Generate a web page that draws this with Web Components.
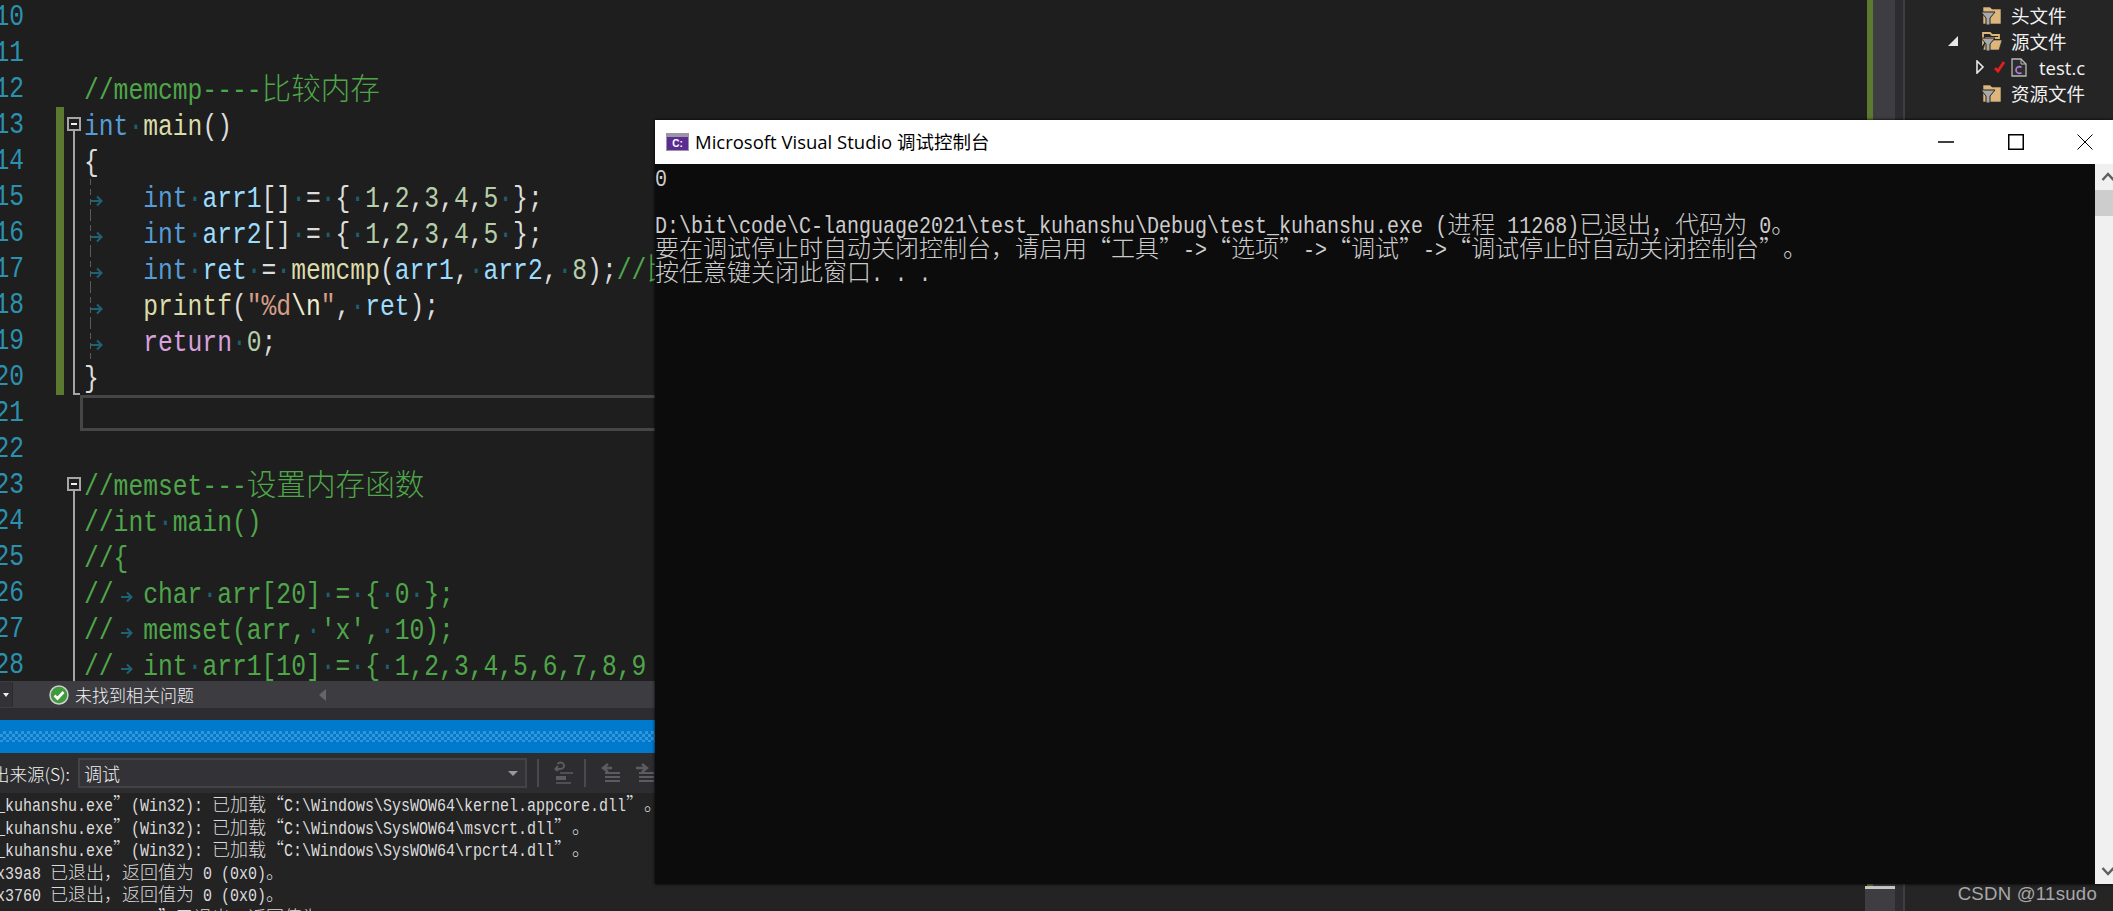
<!DOCTYPE html>
<html>
<head>
<meta charset="utf-8">
<title>Visual Studio</title>
<style>
  html, body { margin: 0; height: 100%; background: #1e1e1e; overflow: hidden; }
</style>
</head>
<body>
<vs-ide>
  <vs-editor slot="editor"></vs-editor>
  <vs-status slot="status"></vs-status>
  <vs-output slot="output"></vs-output>
  <vs-explorer slot="explorer">
    <tree-row icon="folder">头文件</tree-row>
    <tree-row icon="open" twisty="open">源文件</tree-row>
    <tree-row icon="file" twisty="closed">test.c</tree-row>
    <tree-row icon="folder">资源文件</tree-row>
  </vs-explorer>
  <vs-console slot="console"></vs-console>
</vs-ide>

<script>
// Text in the shot is a thin, tall fixed font: latin runs get a mono font stretched a bit, CJK runs a full-width font.
const textCss = `
  .lat { font-family: "Liberation Mono", monospace; font-size: var(--lat); display: inline-block; white-space: pre;
         transform: scaleY(1.2); transform-origin: 50% 66%; }
  .cjk { font-family: "Noto Sans CJK SC", sans-serif; font-size: var(--cjk); font-weight: 300; white-space: pre; text-spacing-trim: space-all; }
  .dot { color: #1d5f70; }
  .strut { font-family: "Noto Sans CJK SC", sans-serif; font-size: var(--cjk); font-weight: 300; }
`;

function esc(s) {
  return s.replace(/&/g, '&amp;').replace(/</g, '&lt;');
}

function runs(text) {
  return text.replace(/([\u3000-\u9fff\uff00-\uffef“”]+)|(·+)|([^\u3000-\u9fff\uff00-\uffef“”·]+)/g, (m, cjk, dot) => {
    if (cjk) return `<span class="cjk">${m}</span>`;
    if (dot) return `<span class="lat dot">${m}</span>`;
    return `<span class="lat">${esc(m)}</span>`;
  });
}

class VsIde extends HTMLElement {
  connectedCallback() {
    this.attachShadow({ mode: 'open' });
    this.shadowRoot.innerHTML = `
      <style>
        :host { display: grid; grid-template-columns: 1865px 30px 10px 1fr; width: 2113px; height: 911px; position: relative; overflow: hidden; background: #1e1e1e; }
        .main { display: flex; flex-direction: column; min-width: 0; height: 911px; }
        .scroll { display: flex; flex-direction: column; background: #3e3e42; }
        .scroll .top { flex: 1; background: #3e3e42; border-left: 2px solid #1e1e1e; }
        .scroll .top i { display: block; width: 6px; height: 100%; background: #5b7a2f; }
        .scroll .bottom { height: 25px; border-top: 3px solid #c8c8c8; box-sizing: border-box; }
        .split { background: #2d2d30; border-right: 2px solid #3e3e42; }
        .mark { position: absolute; right: 16px; bottom: 6px; font: 18.6px "Liberation Sans", sans-serif; color: #a8a8a8; letter-spacing: .25px; }
      </style>
      <div class="main">
        <slot name="editor"></slot>
        <slot name="status"></slot>
        <slot name="output"></slot>
      </div>
      <div class="scroll"><div class="top"><i></i></div><div class="bottom"></div></div>
      <div class="split"></div>
      <slot name="explorer"></slot>
      <slot name="console"></slot>
      <div class="mark">CSDN @11sudo</div>
    `;
  }
}

// n, source, fold gutter kind, flags. ‹x|..› marks a coloured token, → is a tab up to the next 4 column stop.
const SOURCE = [
  [10, ''],
  [11, ''],
  [12, '‹c|//memcmp----比较内存›'],
  [13, '‹k|int›·‹f|main›()', 'open', 'changed'],
  [14, '{', 'line', 'changed'],
  [15, '→‹k|int›·‹v|arr1›[]·=·{·‹n|1›,‹n|2›,‹n|3›,‹n|4›,‹n|5›·};', 'line', 'changed guide'],
  [16, '→‹k|int›·‹v|arr2›[]·=·{·‹n|1›,‹n|2›,‹n|3›,‹n|4›,‹n|5›·};', 'line', 'changed guide'],
  [17, '→‹k|int›·‹v|ret›·=·‹f|memcmp›(‹v|arr1›,·‹v|arr2›,·‹n|8›);‹c|//比›', 'line', 'changed guide'],
  [18, '→‹f|printf›(‹s|"%d›‹e|\\n›‹s|"›,·‹v|ret›);', 'line', 'changed guide'],
  [19, '→‹r|return›·‹n|0›;', 'line', 'changed guide'],
  [20, '}', 'end', 'changed'],
  [21, '', '', 'cur'],
  [22, ''],
  [23, '‹c|//memset---设置内存函数›', 'open'],
  [24, '‹c|//int›·‹c|main()›', 'line'],
  [25, '‹c|//{›', 'line'],
  [26, '‹c|//›→‹c|char›·‹c|arr[20]›·‹c|=›·‹c|{›·‹c|0›·‹c|};›', 'line'],
  [27, '‹c|//›→‹c|memset(arr,›·‹c|\'x\',›·‹c|10);›', 'line'],
  [28, '‹c|//›→‹c|int›·‹c|arr1[10]›·‹c|=›·‹c|{›·‹c|1,2,3,4,5,6,7,8,9›', 'line'],
  [29, '‹c|//›→‹c|int›', 'line'],
];

function renderCode(src) {
  let col = 0, out = '';
  src.split(/(‹\w\|[^›]*›|→)/).forEach(part => {
    if (!part) return;
    if (part === '→') {
      const w = 4 - col % 4;
      out += `<span class="tab" style="width:${w * 14.8}px"><svg width="12" height="14" viewBox="0 0 12 14"><path d="M0 7h10M6 2.500l4.500 4.500-4.500 4.500" fill="none" stroke="#1d6275" stroke-width="2"/></svg></span>`;
      col += w;
    } else if (part[0] === '‹') {
      const body = part.slice(3, -1);
      out += `<span class="${part[1]}">${runs(body)}</span>`;
      col += [...body].reduce((a, c) => a + (/[\u3000-\u9fff]/.test(c) ? 2 : 1), 0);
    } else {
      out += runs(part);
      col += part.length;
    }
  });
  return out;
}

class VsEditor extends HTMLElement {
  connectedCallback() {
    this.attachShadow({ mode: 'open' });
    const rows = SOURCE.map(([n, src, fold = '', flags = '']) => `
      <div class="row ${flags}">
        <div class="num strut">${runs(String(n))}</div>
        <div class="bar"></div>
        <div class="fold ${fold}">${fold === 'open' ? '<b></b>' : ''}</div>
        <div class="code strut">${renderCode(src)}</div>
      </div>`).join('');
    this.shadowRoot.innerHTML = `
      <style>
        :host { display: block; height: 681px; overflow: hidden; background: #1e1e1e; --lat: 24.67px; --cjk: 29.6px; color: #dcdcdc; }
        ${textCss}
        .list { margin-top: -1px; }
        .row { display: flex; height: 36px; line-height: 36px; }
        .num { width: 24px; box-sizing: border-box; padding-top: 1px; display: flex; justify-content: flex-end; color: #2b91af; flex: none; }
        .bar { width: 8px; margin-left: 32px; flex: none; }
        .changed .bar { background: #5b7a2f; }
        .fold { width: 16px; flex: none; position: relative; }
        .fold.line::before, .fold.open::before, .fold.end::before { content: ""; position: absolute; left: 9px; top: 0; bottom: 0; width: 2px; background: #a5a5a5; }
        .fold.open::before { top: 24px; }
        .fold.end::before { bottom: 1px; }
        .fold.end::after { content: ""; position: absolute; left: 9px; bottom: 0; width: 7px; height: 2px; background: #a5a5a5; }
        .fold b { position: absolute; left: 3px; top: 10px; width: 10px; height: 10px; border: 2px solid #a5a5a5; background: #1e1e1e; }
        .fold b::after { content: ""; position: absolute; left: 2px; right: 2px; top: 4px; height: 2px; background: #f1f1f1; }
        .code { flex: 1; padding-left: 4px; white-space: pre; overflow: hidden; line-height: 31px; }
        .guide .code { background: repeating-linear-gradient(to bottom, #5a5a5a 0 6px, transparent 6px 10px) 10px 0 / 1px 100% no-repeat; }
        .cur .code { border: 3px solid #464646; border-right: 0; box-sizing: border-box; }
        .tab { display: inline-block; box-sizing: border-box; padding-left: 7px; vertical-align: baseline; }
        .tab svg { vertical-align: -1px; }
        .k { color: #569cd6; } .f { color: #dcdcaa; } .v { color: #9cdcfe; } .n { color: #b5cea8; }
        .c { color: #4fa64a; } .r { color: #d8a0df; } .s { color: #d69d85; } .e { color: #efefd0; }
      </style>
      <div class="list">${rows}</div>
    `;
  }
}

class VsStatus extends HTMLElement {
  connectedCallback() {
    this.attachShadow({ mode: 'open' });
    this.shadowRoot.innerHTML = `
      <style>
        :host { display: block; font-family: "Noto Sans CJK SC", sans-serif; flex: none; }
        .strip { height: 27px; background: #3c3c41; display: flex; align-items: center; }
        .drop { width: 12px; height: 25px; background: #333337; border-right: 1px solid #2a2a2d; border-radius: 0 2px 2px 0; display: flex; align-items: center; }
        .drop i { margin-left: 3px; border: 3.5px solid transparent; border-top: 4px solid #f1f1f1; border-bottom: 0; }
        svg.ok { margin-left: 36px; }
        .label { margin-left: 6px; width: 244px; font-size: 17px; font-weight: 300; color: #f1f1f1; }
        .back { border: 6px solid transparent; border-right: 7px solid #66666a; border-left: 0; }
        .gap { height: 12px; background: #2d2d30; }
        .bar { height: 33px; box-sizing: border-box; padding-top: 11px; background: #007acc; }
        .bar i { display: block; height: 11px; opacity: .85;
                 background: conic-gradient(#3d9bdb 25%, transparent 0 50%, #3d9bdb 0 75%, transparent 0) 0 0 / 6px 6px; }
      </style>
      <div class="strip">
        <div class="drop"><i></i></div>
        <svg class="ok" width="20" height="20" viewBox="0 0 20 20">
          <circle cx="10" cy="10" r="9" fill="#3f9a3c" stroke="#cfcfcf" stroke-width="1.5"/>
          <path d="M5.5 10.5l3 3 6-6.5" fill="none" stroke="#fff" stroke-width="2.6"/>
        </svg>
        <div class="label">未找到相关问题</div>
        <div class="back"></div>
      </div>
      <div class="gap"></div>
      <div class="bar"><i></i></div>
    `;
  }
}

const OUTPUT = [
  String.raw`_kuhanshu.exe”(Win32): 已加载“C:\Windows\SysWOW64\kernel.appcore.dll”。`,
  String.raw`_kuhanshu.exe”(Win32): 已加载“C:\Windows\SysWOW64\msvcrt.dll”。`,
  String.raw`_kuhanshu.exe”(Win32): 已加载“C:\Windows\SysWOW64\rpcrt4.dll”。`,
  'x39a8 已退出\uff0c返回值为 0 (0x0)。',
  'x3760 已退出\uff0c返回值为 0 (0x0)。',
  '[    _kuhanshu.exe”已退出\uff0c返回值为 0 (0x0)。',
];

class VsOutput extends HTMLElement {
  connectedCallback() {
    this.attachShadow({ mode: 'open' });
    this.shadowRoot.innerHTML = `
      <style>
        :host { display: flex; flex-direction: column; flex: 1; min-height: 0; --lat: 15px; --cjk: 18px; color: #dcdcdc; background: #232324; overflow: hidden; }
        ${textCss}
        .tools { height: 40px; flex: none; background: #2d2d30; display: flex; align-items: center; }
        .src { width: 70px; flex: none; margin-right: 8px; display: flex; justify-content: flex-end; overflow: hidden; white-space: nowrap; font: 300 17.5px "Noto Sans CJK SC", sans-serif; color: #f1f1f1; }
        .combo { width: 449px; height: 30px; flex: none; box-sizing: border-box; border: 2px solid #434346; background: #333337; display: flex; align-items: center; justify-content: space-between; padding: 0 4px; color: #f1f1f1; font: 300 18px "Noto Sans CJK SC", sans-serif; }
        .combo i { border: 5px solid transparent; border-top: 5px solid #999; border-bottom: 0; margin-right: 3px; }
        .sep { width: 2px; height: 28px; background: #4a4a4e; flex: none; }
        svg { flex: none; }
        .log { margin: -1px 0 0 -4px; white-space: pre; line-height: 22.5px; }
        .log div { height: 22.5px; }
      </style>
      <div class="tools">
        <div class="src">出来源(S):</div>
        <div class="combo">调试<i></i></div>
        <div class="sep" style="margin-left:10px"></div>
        <svg style="margin-left:14px" width="20" height="24" viewBox="0 0 20 24" fill="none" stroke="#5c5c60" stroke-width="2">
          <path d="M5 5L2.5 8 5 10M3 8h4c4 0 5-3 3-5.500C9 1 6 1 4.500 3"/>
          <path d="M7 12h13M3 22h15" stroke-width="1.600"/>
          <path d="M3 17h10" stroke-width="4"/>
        </svg>
        <div class="sep" style="margin-left:11px"></div>
        <svg style="margin-left:15px" width="19" height="22" viewBox="0 0 19 22" fill="none" stroke="#5c5c60" stroke-width="2">
          <path d="M7 2L2 6l5 4M2 6h9" stroke-width="2.400"/>
          <path d="M4 11h15M4 15h15M4 19h15" stroke-width="2.200"/>
        </svg>
        <svg style="margin-left:15px" width="19" height="22" viewBox="0 0 19 22" fill="none" stroke="#5c5c60" stroke-width="2">
          <path d="M7 2l5 4-5 4M12 6H1" stroke-width="2.400"/>
          <path d="M4 11h15M4 15h15M4 19h15" stroke-width="2.200"/>
        </svg>
      </div>
      <div class="log strut">${OUTPUT.map(l => `<div>${runs(l)}</div>`).join('')}</div>
    `;
  }
}

class VsExplorer extends HTMLElement {
  connectedCallback() {
    this.attachShadow({ mode: 'open' });
    this.shadowRoot.innerHTML = `
      <style>
        :host { display: block; background: #252526; padding-top: 2px; }
      </style>
      <slot></slot>
    `;
  }
}

const TREE_ICONS = {
  folder: `<svg width="21" height="21" viewBox="0 0 21 21">
      <path d="M2 2h7l2 2h9v15H2z" fill="#dcb67a" stroke="#2a2a2a" stroke-width=".6"/>
      <path d="M0 7h14L9 13v7H5v-7z" fill="#a9a9a9" stroke="#252526"/>
    </svg>`,
  open: `<svg width="21" height="21" viewBox="0 0 21 21">
      <path d="M2 2h7l2 2h7v3H5L2 12z" fill="none" stroke="#dcb67a" stroke-width="1.800"/>
      <path d="M5 9h16l-3 10H2z" fill="#dcb67a" stroke="#2a2a2a" stroke-width=".6"/>
      <path d="M0 7h14L9 13v7H5v-7z" fill="#a9a9a9" stroke="#252526"/>
    </svg>`,
  file: `<svg width="16" height="19" viewBox="0 0 16 19">
      <path d="M1 1h9l5 5v12H1z" fill="#2d2d30" stroke="#b8b8b8" stroke-width="1.300"/>
      <path d="M10 1v5h5" fill="none" stroke="#b8b8b8"/>
      <path d="M10.500 9.500C8 7.800 5 9 5 12s3 4.200 5.500 2.700" fill="none" stroke="#b180d7" stroke-width="1.700"/>
    </svg>`,
};

class TreeRow extends HTMLElement {
  connectedCallback() {
    this.attachShadow({ mode: 'open' });
    const icon = this.getAttribute('icon');
    const twisty = this.getAttribute('twisty');
    let lead = '<span class="pad" style="width:76px"></span>';
    if (twisty === 'open') {
      lead = `<span class="pad" style="width:43px"></span>
        <svg style="width:33px" width="33" height="11" viewBox="0 0 33 11"><path d="M10 0v10H0z" fill="#e8e8e8"/></svg>`;
    }
    if (twisty === 'closed') {
      lead = `<span class="pad" style="width:71px"></span>
        <svg style="width:35px" width="35" height="14" viewBox="0 0 35 14">
          <path d="M1 1l6 6-6 6z" fill="none" stroke="#e8e8e8" stroke-width="1.600"/>
          <path d="M19 8l3 3 6-9" fill="none" stroke="#e51f1f" stroke-width="2.800"/>
        </svg>`;
    }
    this.shadowRoot.innerHTML = `
      <style>
        :host { display: flex; align-items: center; height: 26px; color: #f1f1f1; font: 18.5px "Open Sans", "Noto Sans CJK SC", sans-serif; white-space: nowrap; }
        .pad, svg { flex: none; }
        .icon { width: ${icon === 'file' ? 28 : 30}px; flex: none; display: flex; }
      </style>
      ${lead}<span class="icon">${TREE_ICONS[icon]}</span><slot></slot>
    `;
  }
}

const CONSOLE = [
  '0',
  '',
  String.raw`D:\bit\code\C-language2021\test_kuhanshu\Debug\test_kuhanshu.exe (进程 11268)已退出` + '\uff0c代码为 0。',
  '要在调试停止时自动关闭控制台\uff0c请启用“工具”->“选项”->“调试”->“调试停止时自动关闭控制台”。',
  '按任意键关闭此窗口. . .',
];

class VsConsole extends HTMLElement {
  connectedCallback() {
    this.attachShadow({ mode: 'open' });
    this.shadowRoot.innerHTML = `
      <style>
        :host { position: absolute; left: 655px; top: 120px; width: 1458px; height: 764px; display: flex; flex-direction: column; box-shadow: 0 0 3px #000; --lat: 20px; --cjk: 24px; }
        ${textCss}
        .title { height: 44px; flex: none; background: #fff; display: flex; align-items: center; color: #000; }
        .title svg.app { margin-left: 11px; flex: none; }
        .title .name { margin-left: 6px; flex: 1; padding-bottom: 3px; font: 18.5px "Open Sans", "Noto Sans CJK SC", sans-serif; white-space: nowrap; }
        .btns { display: flex; margin-right: -7px; }
        .btns span { width: 69.500px; height: 44px; display: flex; align-items: center; justify-content: center; }
        .body { flex: 1; display: flex; min-height: 0; background: #0c0c0c; }
        .text { flex: 1; color: #cccccc; line-height: 24px; white-space: pre; overflow: hidden; }
        .text div { height: 23.700px; }
        .bar { width: 18.500px; flex: none; background: #f0f0f0; display: flex; flex-direction: column; }
        .bar .btn { height: 26px; display: flex; align-items: center; }
        .bar .thumb { height: 26px; background: #cdcdcd; }
        .bar .track { flex: 1; }
      </style>
      <div class="title">
        <svg class="app" width="23" height="18" viewBox="0 0 23 18">
          <rect width="23" height="18" fill="#9a96a6"/>
          <rect x="1" y="4" width="21" height="13" fill="#5c2d91"/>
          <text x="11.500" y="14" text-anchor="middle" font-family="Liberation Sans" font-weight="700" font-size="10" fill="#fff">C:\</text>
        </svg>
        <div class="name">Microsoft Visual Studio 调试控制台</div>
        <div class="btns">
          <span><svg width="16" height="2"><path d="M0 1h16" stroke="#000" stroke-width="1.500"/></svg></span>
          <span><svg width="16" height="16"><rect x=".75" y=".75" width="14.500" height="14.500" fill="none" stroke="#000" stroke-width="1.500"/></svg></span>
          <span><svg width="16" height="16"><path d="M.5.500l15 15M15.500.500l-15 15" stroke="#000" fill="none"/></svg></span>
        </div>
      </div>
      <div class="body">
        <div class="text strut">${CONSOLE.map(l => `<div>${runs(l)}</div>`).join('')}</div>
        <div class="bar">
          <div class="btn"><svg width="18.500" height="10" viewBox="0 0 18.500 10"><path d="M7.500 8l5.500-6 5.500 6" fill="none" stroke="#606060" stroke-width="2.500"/></svg></div>
          <div class="thumb"></div>
          <div class="track"></div>
          <div class="btn"><svg width="18.500" height="10" viewBox="0 0 18.500 10"><path d="M7.500 2l5.500 6 5.500-6" fill="none" stroke="#606060" stroke-width="2.500"/></svg></div>
        </div>
      </div>
    `;
  }
}

customElements.define('vs-ide', VsIde);
customElements.define('vs-editor', VsEditor);
customElements.define('vs-status', VsStatus);
customElements.define('vs-output', VsOutput);
customElements.define('vs-explorer', VsExplorer);
customElements.define('tree-row', TreeRow);
customElements.define('vs-console', VsConsole);
</script>
</body>
</html>
